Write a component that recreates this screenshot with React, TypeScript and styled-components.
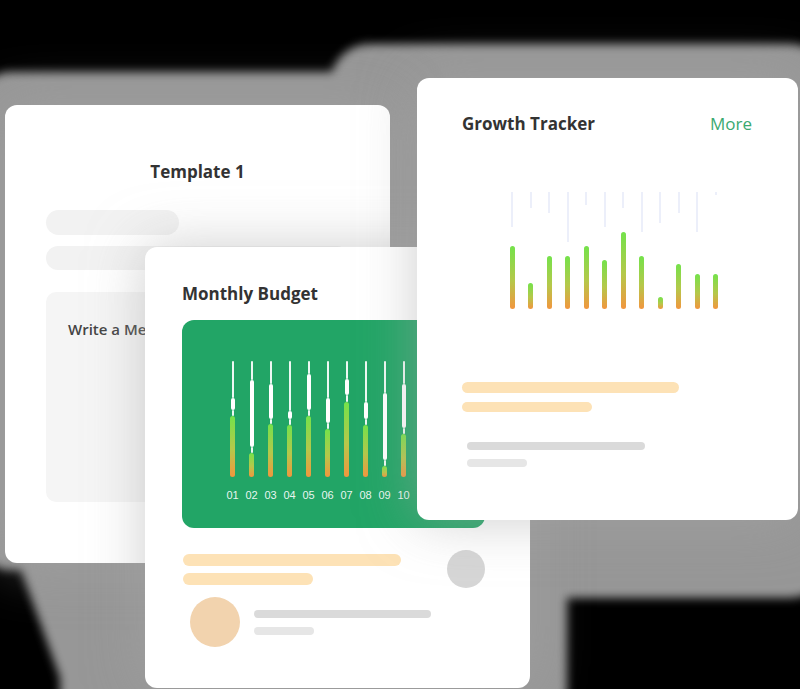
import React from 'react'
import styled, { createGlobalStyle } from 'styled-components'

const GlobalStyle = createGlobalStyle`
    html, body {
        margin: 0;
        padding: 0;
        background: #000;
    }
    body {
        font-family: 'Open Sans', 'Liberation Sans', sans-serif;
    }
`

const Stage = styled.div`
    position: relative;
    width: 800px;
    height: 689px;
    overflow: hidden;
    background: #000;
`

const Backdrop = styled.svg`
    position: absolute;
    left: 0;
    top: 0;
    width: 800px;
    height: 689px;
`

type Frame = { $x: number; $y: number; $w: number; $h: number }

const Card = styled.div<Frame>`
    position: absolute;
    left: ${({ $x }) => $x}px;
    top: ${({ $y }) => $y}px;
    width: ${({ $w }) => $w}px;
    height: ${({ $h }) => $h}px;
    box-sizing: border-box;
    display: flex;
    flex-direction: column;
    background: #fff;
    border-radius: 12px;
    box-shadow: 0 0 55px rgba(165, 165, 165, 0.55);
`

const TemplateCard = styled(Card)`
    padding: 55px 41px 0;
`

const BudgetCard = styled(Card)`
    padding: 35px 45px 0 37px;
`

const GrowthCard = styled(Card)`
    padding: 34px 46px 0 45px;
`

const Title = styled.h3<{ $center?: boolean }>`
    margin: 0;
    font-size: 17px;
    line-height: 24px;
    font-weight: 700;
    color: #333;
    text-align: ${({ $center }) => ($center ? 'center' : 'left')};
`

const Header = styled.div`
    display: flex;
    justify-content: space-between;
    align-items: center;
`

const MoreLink = styled.span`
    font-size: 17px;
    line-height: 24px;
    color: #3aa970;
`

const Placeholder = styled.div<{ $w: string; $h: number; $tone: string }>`
    width: ${({ $w }) => $w};
    height: ${({ $h }) => $h}px;
    border-radius: ${({ $h }) => $h / 2}px;
    background: ${({ $tone }) => $tone};
    flex-shrink: 0;
`

const Lines = styled.div<{ $gap: number; $top?: number; $indent?: number }>`
    display: flex;
    flex-direction: column;
    gap: ${({ $gap }) => $gap}px;
    margin-top: ${({ $top }) => $top || 0}px;
    padding-left: ${({ $indent }) => $indent || 0}px;
`

const MessageBox = styled.div`
    margin-top: 22px;
    height: 210px;
    box-sizing: border-box;
    padding: 27px 22px;
    border-radius: 10px;
    background: #f5f5f5;
    font-size: 15px;
    line-height: 20px;
    font-weight: 600;
    color: #444;
    white-space: nowrap;
`

const BudgetPanel = styled.div`
    margin-top: 14px;
    height: 208px;
    flex-shrink: 0;
    box-sizing: border-box;
    padding: 41px 0 0 41px;
    border-radius: 12px;
    background: #22a566;
    overflow: hidden;
`

const BarRow = styled.div<{ $height?: number; $left?: number; $top?: number }>`
    display: flex;
    align-items: stretch;
    height: ${({ $height }) => ($height ? `${$height}px` : 'auto')};
    margin-left: ${({ $left }) => $left || 0}px;
    margin-top: ${({ $top }) => $top || 0}px;
`

const BudgetColumn = styled.div`
    width: 19px;
    display: flex;
    flex-direction: column;
    align-items: center;
    flex-shrink: 0;
`

const Stem = styled.div`
    height: 116px;
    display: flex;
    flex-direction: column;
    align-items: center;
`

const Segment = styled.div<{ $h: number; $wide?: boolean }>`
    width: ${({ $wide }) => ($wide ? 4 : 2)}px;
    height: ${({ $h }) => $h}px;
    background: #fff;
    border-radius: 2px;
    opacity: ${({ $wide }) => ($wide ? 1 : 0.92)};
`

const Fill = styled.div<{ $h?: number }>`
    width: 5px;
    flex: ${({ $h }) => ($h ? 'none' : 1)};
    height: ${({ $h }) => ($h ? `${$h}px` : 'auto')};
    border-radius: 3px;
    background: linear-gradient(to bottom, #74e24b, #b5c84a 55%, #f2963e);
`

const DayLabel = styled.span`
    margin-top: 11px;
    font-family: 'Liberation Sans', Arial, sans-serif;
    font-size: 11px;
    line-height: 14px;
    color: rgba(255, 255, 255, 0.92);
`

const GrowthColumn = styled.div`
    width: 18.5px;
    display: flex;
    flex-direction: column;
    justify-content: space-between;
    align-items: center;
    flex-shrink: 0;
`

const Track = styled.div<{ $h: number }>`
    width: 2px;
    height: ${({ $h }) => $h}px;
    background: #eceffa;
`

const SummaryRow = styled.div`
    margin-top: 22px;
    display: flex;
    justify-content: space-between;
    align-items: center;
    padding-left: 1px;
`

const Dot = styled.div<{ $size: number; $tone: string }>`
    width: ${({ $size }) => $size}px;
    height: ${({ $size }) => $size}px;
    border-radius: 50%;
    background: ${({ $tone }) => $tone};
    flex-shrink: 0;
`

const AuthorRow = styled.div`
    margin-top: 9px;
    padding-left: 8px;
    display: flex;
    align-items: center;
    gap: 14px;
`

// thin top, thick white, thin gap, coloured fill takes the rest
const budget = [
    [37, 12, 6],
    [19, 67, 6],
    [23, 35, 5],
    [50, 8, 6],
    [13, 36, 6],
    [37, 25, 6],
    [18, 16, 7],
    [41, 17, 6],
    [32, 67, 6],
    [23, 44, 6],
    [30, 30, 6],
]

// track length, fill height
const growth = [
    [35, 63],
    [16, 26],
    [21, 53],
    [50, 53],
    [13, 63],
    [35, 49],
    [16, 77],
    [40, 53],
    [31, 12],
    [21, 45],
    [40, 35],
    [3, 35],
]

const ORANGE = '#fde2b6'

const App = () => {
    return (
        <Stage>
            <GlobalStyle />
            <Backdrop viewBox="0 0 800 689">
                <defs>
                    <filter id="soft" x="-20%" y="-20%" width="140%" height="140%">
                        <feGaussianBlur stdDeviation="5" />
                    </filter>
                </defs>
                <g fill="#979797" filter="url(#soft)">
                    <rect x="-20" y="72" width="460" height="498" rx="30" />
                    <rect x="330" y="44" width="500" height="554" rx="40" />
                    <rect x="60" y="220" width="507" height="520" rx="50" />
                    <polygon points="-20,480 300,480 300,700 68,700 18,562 -20,562" />
                </g>
            </Backdrop>

            <TemplateCard $x={5} $y={105} $w={385} $h={458}>
                <Title $center>Template 1</Title>
                <Lines $gap={11} $top={26}>
                    <Placeholder $w="133px" $h={25} $tone="#f2f2f2" />
                    <Placeholder $w="100%" $h={24} $tone="#f2f2f2" />
                </Lines>
                <MessageBox>Write a Message</MessageBox>
            </TemplateCard>

            <BudgetCard $x={145} $y={247} $w={385} $h={441}>
                <Title>Monthly Budget</Title>
                <BudgetPanel>
                    <BarRow>
                        {budget.map(([top, thick, gap], i) => (
                            <BudgetColumn key={i}>
                                <Stem>
                                    <Segment $h={top} />
                                    <Segment $h={thick} $wide />
                                    <Segment $h={gap} />
                                    <Fill />
                                </Stem>
                                <DayLabel>{String(i + 1).padStart(2, '0')}</DayLabel>
                            </BudgetColumn>
                        ))}
                    </BarRow>
                </BudgetPanel>
                <SummaryRow>
                    <Lines $gap={7}>
                        <Placeholder $w="218px" $h={12} $tone={ORANGE} />
                        <Placeholder $w="130px" $h={12} $tone={ORANGE} />
                    </Lines>
                    <Dot $size={38} $tone="#d6d6d6" />
                </SummaryRow>
                <AuthorRow>
                    <Dot $size={50} $tone="#f2d3ae" />
                    <Lines $gap={9}>
                        <Placeholder $w="177px" $h={8} $tone="#dadada" />
                        <Placeholder $w="60px" $h={8} $tone="#e6e6e6" />
                    </Lines>
                </AuthorRow>
            </BudgetCard>

            <GrowthCard $x={417} $y={78} $w={381} $h={442}>
                <Header>
                    <Title>Growth Tracker</Title>
                    <MoreLink>More</MoreLink>
                </Header>
                <BarRow $height={117} $left={41} $top={56}>
                    {growth.map(([track, fill], i) => (
                        <GrowthColumn key={i}>
                            <Track $h={track} />
                            <Fill $h={fill} />
                        </GrowthColumn>
                    ))}
                </BarRow>
                <Lines $gap={9} $top={73}>
                    <Placeholder $w="217px" $h={11} $tone={ORANGE} />
                    <Placeholder $w="130px" $h={10} $tone={ORANGE} />
                </Lines>
                <Lines $gap={9} $top={30} $indent={5}>
                    <Placeholder $w="178px" $h={8} $tone="#dadada" />
                    <Placeholder $w="60px" $h={8} $tone="#e6e6e6" />
                </Lines>
            </GrowthCard>
        </Stage>
    )
}

export default App
